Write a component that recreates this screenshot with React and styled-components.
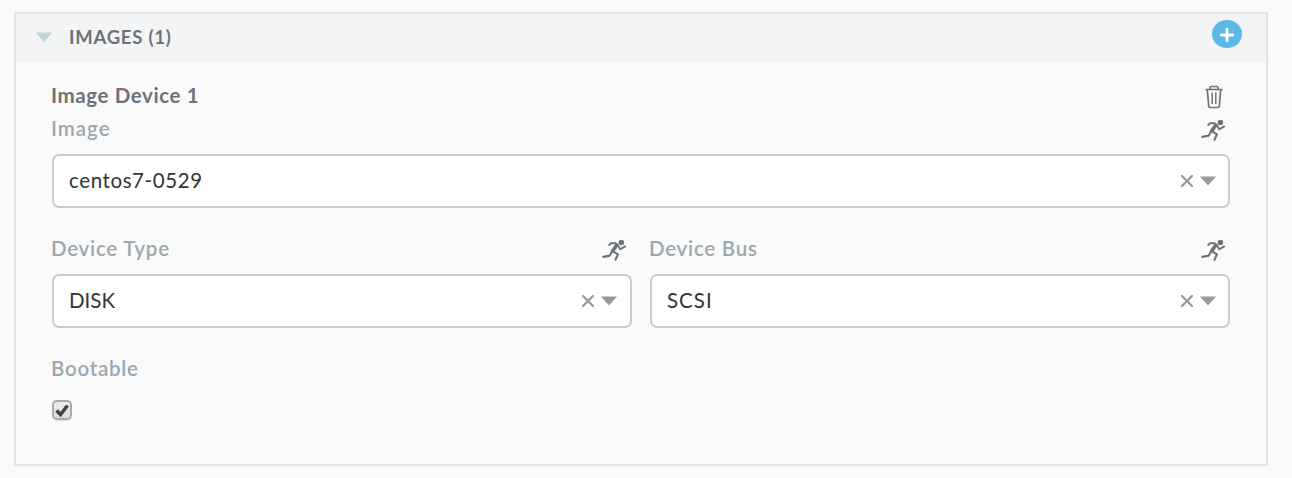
import React from "react";
import styled, { createGlobalStyle } from "styled-components";

const GlobalStyle = createGlobalStyle`
  * { box-sizing: border-box; }
  body {
    margin: 0;
    background: #fafafa;
    font-family: Lato, "Liberation Sans", sans-serif;
  }
`;

const Page = styled.main`
  height: 478px;
  padding: 12px 24px 12px 14px;
`;

const Panel = styled.section`
  height: 454px;
  border: 2px solid #dfe5e4;
`;

const Header = styled.header`
  display: flex;
  align-items: center;
  height: 48px;
  padding: 0 24px 0 20px;
  background: #f2f4f6;
`;

const Title = styled.h2`
  flex: 1;
  margin: 0 0 2px 17px;
  font-size: 18.5px;
  font-weight: 700;
  line-height: 24px;
  color: #6b7378;
`;

const AddButton = styled.button`
  display: flex;
  width: 30px;
  height: 28px;
  margin-bottom: 8px;
  padding: 0;
  border: 0;
  border-radius: 50%;
  background: #5bb9e8;
`;

const Body = styled.div`
  display: flex;
  flex-direction: column;
  padding: 19px 36px 0 35px;
`;

const Row = styled.div`
  display: flex;
  align-items: center;
  justify-content: space-between;
  height: 34px;
  padding-right: ${(p) => p.$inset ?? 5}px;

  svg { margin-bottom: 2px; }
`;

const DeviceName = styled.h3`
  margin: 0 0 6px;
  font-size: 20.5px;
  font-weight: 700;
  line-height: 26px;
  color: #6b7378;
`;

const Label = styled.label`
  margin-bottom: 7px;
  font-size: 20.5px;
  font-weight: 600;
  line-height: 25px;
  color: #9aa8b0;
`;

const Text = styled.span`
  letter-spacing: ${(p) => p.$track}px;
`;

const Columns = styled.div`
  display: grid;
  grid-template-columns: 581px 1fr;
  gap: 17px;
  margin: 27px 0 28px;
`;

const Select = styled.div`
  display: flex;
  align-items: center;
  height: 54px;
  margin: 5px 0 0 1px;
  padding: 0 12px 0 15px;
  border: 2px solid #cbcbcb;
  border-radius: 7px;
  background: #fff;
`;

const Value = styled.span`
  flex: 1;
  margin-bottom: 3px;
  font-size: 20.5px;
  line-height: 28px;
  color: #333;
`;

const Checkbox = styled.span`
  display: flex;
  width: 20px;
  height: 20px;
  margin: 12px 0 0 1px;
  border: 2px solid #aaa;
  border-radius: 5px;
  background: linear-gradient(#eee, #dcdcdc);
  box-shadow: 0 1px 1px #ddd;
`;

const Runner = () => (
  <svg width="25" height="24" viewBox="0 0 25 24" fill="none" stroke="#6b7378" strokeLinecap="round" strokeLinejoin="round">
    <circle cx="19.4" cy="3.5" r="2.8" fill="#6b7378" stroke="none" />
    <path d="M7.2 6 9 4.1l4.6.1 2.4 2 2.3 4 4.9-2.8" strokeWidth="1.9" />
    <path d="M14.4 6.7 10.8 11.8" strokeWidth="3.6" />
    <path d="M9.8 12.6 7.8 16.6l-6.5 1.3M11.6 12.6l4.3 2.8-2.4 5.3" strokeWidth="2.1" />
  </svg>
);

const Trash = () => (
  <svg width="18" height="24" viewBox="0 0 18 24" fill="none" stroke="#6b7378" strokeLinecap="round" strokeLinejoin="round">
    <path d="M1.2 4.5h15.6M5 4V2.6Q5.1 1.5 6.2 1.5h5.6Q12.9 1.5 13 2.6V4M2.3 5l1.4 15.8q.2 1.7 1.8 1.7h7q1.6 0 1.8-1.7L15.7 5" strokeWidth="1.7" />
    <path d="M7.2 8v10.5M10.8 8v10.5" strokeWidth="1.5" />
  </svg>
);

const SelectBox = ({ value, track, inset = 0 }) => (
  <Select>
    <Value><Text $track={track}>{value}</Text></Value>
    <svg width={37 + inset} height="14" viewBox={`0 0 ${37 + inset} 14`}>
      <path d="m2 2 10 10m0-10L2 12" stroke="#999" strokeWidth="2.3" strokeLinecap="round" />
      <path d="M20 2.5h16L28 11.5z" fill="#999" />
    </svg>
  </Select>
);

const Field = ({ label, labelTrack, inset, value, valueTrack, endGap }) => (
  <div>
    <Row $inset={inset}>
      <Label><Text $track={labelTrack}>{label}</Text></Label>
      <Runner />
    </Row>
    <SelectBox value={value} track={valueTrack} inset={endGap} />
  </div>
);

export default function App() {
  return (
    <>
      <GlobalStyle />
      <Page>
        <Panel>
          <Header>
            <svg width="16" height="12" viewBox="0 0 16 12">
              <path d="M0 .5h16L8 10.5z" fill="#c2d3da" />
            </svg>
            <Title><Text $track={0.75}>IMAGES (1)</Text></Title>
            <AddButton aria-label="Add image">
              <svg width="30" height="28" viewBox="0 0 30 28">
                <path d="M15 9.2v11.6M9.2 15h11.6" stroke="#fff" strokeWidth="2.8" strokeLinecap="round" />
              </svg>
            </AddButton>
          </Header>
          <Body>
            <Row $inset={7}>
              <DeviceName><Text $track={0.6}>Image Device 1</Text></DeviceName>
              <Trash />
            </Row>
            <Field label="Image" labelTrack={1} inset={4} value="centos7-0529" valueTrack={0.6} endGap={-1} />
            <Columns>
              <Field label="Device Type" labelTrack={0.75} value="DISK" valueTrack={0} />
              <Field label="Device Bus" labelTrack={0.75} inset={4} value="SCSI" valueTrack={1} endGap={-1} />
            </Columns>
            <Label><Text $track={0.75}>Bootable</Text></Label>
            <Checkbox role="checkbox" aria-checked="true">
              <svg width="16" height="16" viewBox="0 0 16 16">
                <path d="m2.5 8.5 4 4 7-9" fill="none" stroke="#444" strokeWidth="3.6" />
              </svg>
            </Checkbox>
          </Body>
        </Panel>
      </Page>
    </>
  );
}
